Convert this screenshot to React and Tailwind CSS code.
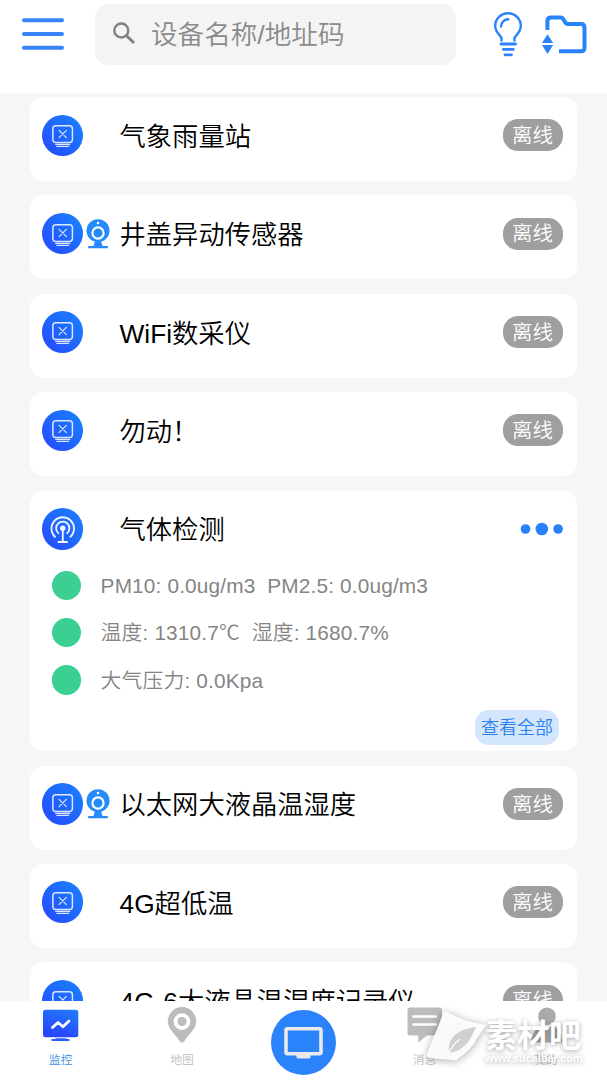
import React from 'react';

const devices = [
  { name: '气象雨量站' },
  { name: '井盖异动传感器', camera: true },
  { name: 'WiFi数采仪' },
  { name: '勿动！' },
  {
    name: '气体检测',
    online: true,
    readings: ['PM10: 0.0ug/m3  PM2.5: 0.0ug/m3', '温度: 1310.7℃  湿度: 1680.7%', '大气压力: 0.0Kpa'],
  },
  { name: '以太网大液晶温湿度', camera: true },
  { name: '4G超低温' },
  { name: '4G-6大液晶温湿度记录仪' },
];

const MenuIcon = () => (
  <svg width="42" height="34" viewBox="0 0 42 34" stroke="#3684f7" strokeWidth="4" strokeLinecap="round">
    <path d="M2 3.2H40M2 17H40M2 30.8H40" />
  </svg>
);

const SearchIcon = () => (
  <svg width="24" height="24" viewBox="0 0 24 24" fill="none" stroke="#828282" strokeWidth="2.4">
    <circle cx="9.3" cy="8.5" r="7" />
    <path d="M14.3 13.5L22 21" strokeWidth="3" />
  </svg>
);

const BulbIcon = () => (
  <svg width="28" height="46" viewBox="0 0 28 46" fill="none" stroke="#2b83fb" strokeWidth="2.4" strokeLinecap="round">
    <path d="M7.5 28.6V26.5C7.5 23.5 1.2 21 1.2 14a12.8 12.8 0 0 1 25.6 0C26.8 21 20.5 23.5 20.5 26.5V28.6" />
    <path d="M7 14.5A7.3 7.3 0 0 1 14.3 7.2" />
    <path d="M7 32H21.5M9.3 37.4H19.3M11 42.8H17.5" strokeWidth="2.8" />
  </svg>
);

const FolderIcon = () => (
  <svg width="46" height="40" viewBox="0 0 46 40" fill="none" stroke="#2b83fb" strokeWidth="4">
    <path d="M5.4 15V6Q5.4 2.5 9 2.5H18.5Q20.5 2.5 21.5 4.5L23 7Q24 9 26.5 9H39Q42.5 9 42.5 12.5V32.7Q42.5 36.2 39 36.2H17" />
    <path d="M5.5 19.2L11.2 28H0ZM0 30H11.2L5.5 39Z" fill="#2b83fb" stroke="none" />
  </svg>
);

const DeviceIcon = ({ online }) => (
  <div className="flex size-[41.5px] shrink-0 items-center justify-center rounded-full bg-linear-to-bl from-[#1d82fd] to-[#2745fe]">
    {online ? (
      <svg width="42" height="42" viewBox="0 0 42 42" fill="none" stroke="#f3f6ff" strokeWidth="1.9" strokeLinecap="round">
        <path d="M13.2 28.8A11.4 11.4 0 1 1 28.8 28.8" />
        <path d="M16.5 25.2A6.7 6.7 0 1 1 25.5 25.2" />
        <circle cx="21" cy="20.2" r="2.7" fill="#f3f6ff" stroke="none" />
        <path d="M21 21V34.2M16.6 34.2H25.4" />
      </svg>
    ) : (
      <svg width="42" height="42" viewBox="0 0 42 42" fill="none" stroke="#dce7ff" strokeWidth="1.5" strokeLinecap="round">
        <rect x="11" y="11.6" width="19.8" height="17" rx="3" />
        <path d="M17.3 16.3L24.7 23.7M24.7 16.3L17.3 23.7M13.8 30.4H28.2M15 32.5H27" strokeWidth="1.2" />
      </svg>
    )}
  </div>
);

const CameraIcon = () => (
  <svg width="24" height="30" viewBox="0 0 24 30">
    <circle cx="12" cy="11.7" r="11.5" fill="#258afa" />
    <circle cx="12" cy="14" r="5.6" fill="none" stroke="white" strokeWidth="2.2" />
    <circle cx="12" cy="4" r="1.3" fill="white" />
    <path d="M9 22L7.5 27H2.2V29.2H21.8V27H16.5L15 22Z" fill="#258afa" />
  </svg>
);

const MoreIcon = () => (
  <svg width="43" height="14" viewBox="0 0 43 14" fill="#2880fa">
    <circle cx="5.5" cy="7" r="4.8" />
    <circle cx="21.8" cy="7" r="6.3" />
    <circle cx="38.1" cy="7" r="4.8" />
  </svg>
);

const DeviceCard = ({ device }) => (
  <div className="shrink-0 rounded-[13px] bg-white">
    <div className="flex h-[84px] items-start pr-[14.5px] pl-[11.5px] pt-[17.5px]">
      <div className="flex h-[41.5px] w-[78px] items-center gap-[3px]">
        <DeviceIcon online={device.online} />
        {device.camera && <CameraIcon />}
      </div>
      <div className="flex h-[45px] flex-1 items-center text-[26.3px] leading-none whitespace-nowrap text-black">{device.name}</div>
      {device.online ? (
        <div className="flex h-[41.5px] items-center">
          <MoreIcon />
        </div>
      ) : (
        <div className="mt-[4.8px] flex h-[32px] w-[60px] items-center justify-center rounded-[15px] bg-[#9f9f9f] pt-[2px] text-[20.5px] leading-none text-white">
          离线
        </div>
      )}
    </div>
    {device.readings && (
      <div className="-mt-[4px] flex h-[180.6px] flex-col pl-[21.5px]">
        {device.readings.map((text) => (
          <div key={text} className="flex h-[47.3px] items-start gap-[19.5px]">
            <div className="size-[29.6px] shrink-0 rounded-full bg-[#3bcf93]" />
            <div className="flex h-[32px] items-center text-[20.8px] leading-none tracking-[0.16px] whitespace-pre text-[#858585]">{text}</div>
          </div>
        ))}
        <button className="mt-[-2px] mr-[18px] flex h-[35px] w-[84px] shrink-0 items-center justify-center self-end rounded-[14px] bg-[#d4e5fe] pt-[1px] text-[18px] leading-none font-[350] whitespace-nowrap text-[#2b82ec]">
          查看全部
        </button>
      </div>
    )}
  </div>
);

const Header = () => (
  <header className="flex h-[93px] shrink-0 items-start bg-white pl-[22px]">
    <div className="mt-[17px] w-[73px]">
      <MenuIcon />
    </div>
    <div className="mt-[3.5px] flex h-[61.5px] w-[361px] items-center gap-[15px] rounded-[14px] bg-[#f4f4f4] pl-[17px]">
      <SearchIcon />
      <span className="pt-[3px] text-[26.6px] leading-none whitespace-nowrap text-[#8a8a8a]">设备名称/地址码</span>
    </div>
    <div className="mt-[12px] ml-[38px] flex gap-[20px]">
      <BulbIcon />
      <div className="mt-[3px]">
        <FolderIcon />
      </div>
    </div>
  </header>
);

const NavItem = ({ label, active, children }) => (
  <div className="flex w-[121.3px] flex-col items-center">
    <svg width="40" height="40" viewBox="0 0 40 40" fill="#bcbcbc">
      {children}
    </svg>
    <span className={`mt-[10px] text-[11.8px] leading-none ${active ? 'text-[#3d8de3]' : 'text-[#bdbdbd]'}`}>{label}</span>
  </div>
);

const BottomNav = () => (
  <nav className="flex h-[79px] shrink-0 bg-white pt-[4px]">
    <NavItem label="监控" active>
      <defs>
        <linearGradient id="screen" x1="1" y1="0" x2="0.6" y2="1">
          <stop stopColor="#1f7efc" />
          <stop offset="1" stopColor="#2847fd" />
        </linearGradient>
      </defs>
      <rect x="2" y="4.7" width="35.3" height="27.5" rx="2.5" fill="url(#screen)" />
      <path d="M14.5 33.3H25.5V34H28.5V36H10.5V34H14.5Z" fill="#2961fd" />
      <path d="M11.5 22.5L17 17.5L22 21.8L28 16" fill="none" stroke="white" strokeWidth="2.7" strokeLinecap="round" strokeLinejoin="round" />
    </NavItem>
    <NavItem label="地图">
      <path fillRule="evenodd" d="M20 2A14.2 14.2 0 0 0 5.8 16.2C5.8 24.5 13.5 28.5 17.5 36Q20 39.3 22.5 36C26.5 28.5 34.2 24.5 34.2 16.2A14.2 14.2 0 0 0 20 2ZM20 8.3A8.3 8.3 0 1 0 20 24.9A8.3 8.3 0 1 0 20 8.3Z" />
      <circle cx="20" cy="16.6" r="4.6" />
    </NavItem>
    <div className="flex w-[121.3px] justify-center pt-[4.5px]">
      <div className="size-[65px] rounded-full bg-[#2b83fc]">
        <svg width="65" height="65" viewBox="0 0 65 65" fill="none">
          <rect x="15" y="18.7" width="35" height="25" rx="1.5" stroke="#e9e9e9" strokeWidth="3.6" />
          <path d="M25.5 44H39.5V47Q39.5 48.5 38 48.5H27Q25.5 48.5 25.5 47Z" fill="#e9e9e9" />
        </svg>
      </div>
    </div>
    <NavItem label="消息">
      <path d="M5 2.5H34.5Q37 2.5 37 5V28Q37 30.5 34.5 30.5H22L13.3 37.5V30.5H5Q2.5 30.5 2.5 28V5Q2.5 2.5 5 2.5Z" />
      <path d="M8.5 11.5H31M8.5 19.5H31" stroke="white" strokeWidth="2.5" strokeLinecap="round" />
    </NavItem>
    <NavItem label="我的">
      <circle cx="21" cy="11.3" r="8.8" fill="#aaa" />
      <path d="M5 37.5C5 29 10 22 17 21L21 26L25 21C32 22 36 29 36 37.5Z" fill="#aaa" />
    </NavItem>
  </nav>
);

const Watermark = () => (
  <div className="absolute top-[1005px] left-[420px] flex h-[65px] w-[187px]">
    <svg width="65" height="65" viewBox="0 0 65 65" className="shrink-0 overflow-visible drop-shadow-[0_1px_4px_rgba(0,0,0,0.35)]">
      <path d="M26 7L47 16L57 20L57 25Q53 39 38 54Q36 56 33 55L9 53Q6 52 7 49L23 9Q24 6 26 7Z" fill="#fff" fillOpacity="0.93" />
      <path d="M56 22C40 24 27 31 29 48C43 46 49 38 56 22Z" fill="#d0d0d0" />
      <path d="M47 16L66 20L58 32Q51 46 37 54Q52 40 57 22Z" fill="#fff" fillOpacity="0.95" />
      <path d="M28 50Q32 40 40 34" fill="none" stroke="#fff" strokeWidth="1.2" />
    </svg>
    <div className="flex flex-col pt-[16px] text-white [text-shadow:0_1px_5px_rgba(0,0,0,0.35)]">
      <span className="text-[32px] leading-[31px] font-bold whitespace-nowrap">素材吧</span>
      <span className="text-[10.9px] leading-[12px] font-bold whitespace-nowrap">www.sucaibar.com</span>
    </div>
  </div>
);

const App = () => (
  <div className="relative flex h-[1080px] w-[607px] flex-col overflow-hidden bg-[#f6f6f6] font-['Liberation_Sans','Noto_Sans_CJK_SC',sans-serif] font-[350]">
    <Header />
    <main className="flex min-h-0 flex-1 flex-col gap-[14.4px] overflow-hidden px-[30px] pt-[4px]">
      {devices.map((device) => (
        <DeviceCard key={device.name} device={device} />
      ))}
    </main>
    <BottomNav />
    <Watermark />
  </div>
);

export default App;
